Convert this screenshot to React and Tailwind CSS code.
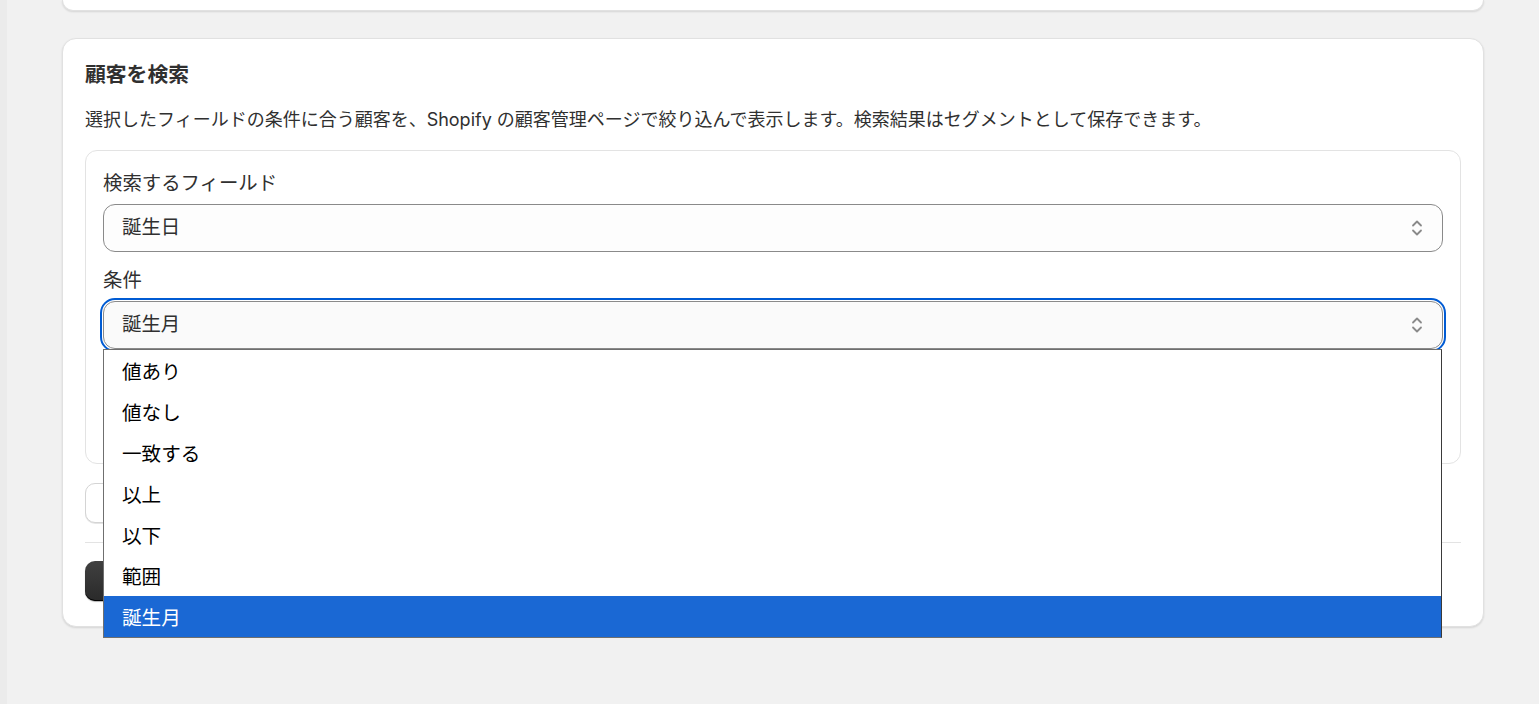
import { useState } from 'react';

const options = ['値あり', '値なし', '一致する', '以上', '以下', '範囲', '誕生月'];

function Chevrons() {
  return (
    <svg width="14" height="20" viewBox="0 0 14 20" fill="none" stroke="#8a8a8a" strokeWidth="1.8" strokeLinecap="round" strokeLinejoin="round">
      <path d="M3 7.5 7 3.5l4 4" />
      <path d="M3 12.5l4 4 4-4" />
    </svg>
  );
}

function Field({ label, value, focused, children }) {
  return (
    <div className="flex flex-col gap-[7px]">
      <label className="text-[19.4px] leading-[28px] text-[#303030]">{label}</label>
      <div className="relative">
        <div
          className={
            focused
              ? 'flex h-[48px] items-center justify-between rounded-[12px] border border-[#8a8a8a] bg-[#fafafa] pl-[18px] pr-[18px] outline-2 outline-offset-[1px] outline-[#005bd3]'
              : 'flex h-[48px] items-center justify-between rounded-[12px] border border-[#8a8a8a] bg-[#fdfdfd] pl-[18px] pr-[18px]'
          }
        >
          <span className="text-[19.4px] text-[#303030]">{value}</span>
          <Chevrons />
        </div>
        {children}
      </div>
    </div>
  );
}

export default function App() {
  const [selected] = useState('誕生月');

  return (
    <div className="flex min-h-screen bg-[#f1f1f1] font-['Inter','Noto_Sans_CJK_JP',sans-serif] text-[#303030]">
      <div className="w-[7px] shrink-0 bg-[#ebebeb]" />
      <div className="flex-1 pl-[55px] pr-[55px]">
        <div className="h-[11px] rounded-b-[14px] border-x border-b border-[#e1e1e1] bg-white shadow-[0_1px_2px_rgba(0,0,0,0.12)]" />

        <div className="mt-[27px] rounded-[14px] border border-[#e1e1e1] bg-white px-[22px] pt-[22px] pb-[25px] shadow-[0_1px_2px_rgba(0,0,0,0.12)]">
          <h2 className="text-[20.8px] font-bold leading-[28px]">顧客を検索</h2>
          <p className="mt-[18px] text-[18px] leading-[26px]">
            選択したフィールドの条件に合う顧客を、Shopify の顧客管理ページで絞り込んで表示します。検索結果はセグメントとして保存できます。
          </p>

          <div className="mt-[17px] flex flex-col gap-[14px] rounded-[12px] border border-[#e3e3e3] px-[17px] pt-[18px] pb-[17px]">
            <Field label="検索するフィールド" value="誕生日" />
            <Field label="条件" value={selected} focused>
              <ul className="absolute left-0 right-[1px] top-full z-10 border border-[#6f6f6f] border-r-[#3a3a3a] bg-white">
                {options.map((o) => (
                  <li
                    key={o}
                    className={
                      o === selected
                        ? 'flex h-[41px] items-center bg-[#1a68d4] pt-[4px] pl-[18px] text-[19.6px] text-white'
                        : 'flex h-[41px] items-center pt-[4px] pl-[18px] text-[19.6px] text-black'
                    }
                  >
                    {o}
                  </li>
                ))}
              </ul>
            </Field>
            <div className="h-[83px]" />
          </div>

          <div className="mt-[19px] h-[40px] w-[150px] rounded-[10px] border border-[#d4d4d4] bg-white shadow-[0_1px_0_rgba(0,0,0,0.1)]" />

          <div className="mt-[19px] h-px bg-[#e3e3e3]" />

          <div className="mt-[18px] h-[40px] w-[150px] rounded-[10px] bg-gradient-to-b from-[#404040] to-[#2a2a2a] shadow-[inset_0_-1px_0_#000,0_1px_1px_rgba(0,0,0,0.3)]" />
        </div>
      </div>
    </div>
  );
}
